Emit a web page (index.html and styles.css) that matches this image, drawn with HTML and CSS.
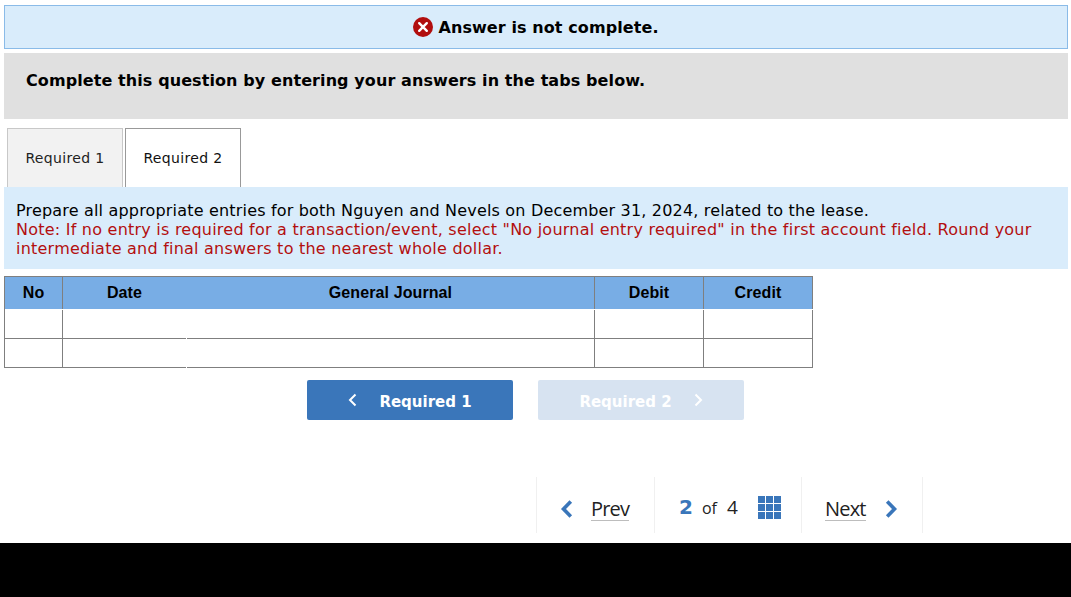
FILE: index.html
```html
<!DOCTYPE html>
<html lang="en">
<head>
<meta charset="utf-8">
<title>Answer is not complete</title>
<link rel="stylesheet" href="styles.css">
</head>
<body>
<main class="page">
  <div class="alert">
    <svg class="alert-icon" width="20" height="20" viewBox="0 0 20 20"><circle cx="10" cy="10" r="10" fill="#b10e0e"/><path d="M6.2 6.2l7.6 7.6M13.8 6.2l-7.6 7.6" stroke="#fff" stroke-width="2.4" stroke-linecap="round"/></svg>
    <strong>Answer is not complete.</strong>
  </div>
  <div class="instruction">Complete this question by entering your answers in the tabs below.</div>
  <div class="tabs">
    <div class="tab">Required 1</div>
    <div class="tab tab-active">Required 2</div>
  </div>
  <div class="note">
    <p>Prepare all appropriate entries for both Nguyen and Nevels on December 31, 2024, related to the lease.</p>
    <p class="note-red">Note: If no entry is required for a transaction/event, select "No journal entry required" in the first account field. Round your intermediate and final answers to the nearest whole dollar.</p>
  </div>
  <div class="journal">
    <div class="row row-head">
      <div class="cell c-no">No</div>
      <div class="cell c-date">Date</div>
      <div class="cell c-gj">General Journal</div>
      <div class="cell c-amt">Debit</div>
      <div class="cell c-amt">Credit</div>
    </div>
    <div class="row">
      <div class="cell c-no"></div>
      <div class="cell c-date"></div>
      <div class="cell c-gj"></div>
      <div class="cell c-amt"></div>
      <div class="cell c-amt"></div>
    </div>
    <div class="row">
      <div class="cell c-no"></div>
      <div class="cell c-date"></div>
      <div class="cell c-gj"></div>
      <div class="cell c-amt"></div>
      <div class="cell c-amt"></div>
    </div>
  </div>
  <div class="steps">
    <div class="step">
      <svg width="10" height="14" viewBox="0 0 10 14"><path d="M7.5 1.5L2 7l5.500 5.500" fill="none" stroke="#fff" stroke-width="2"/></svg>
      <span class="step-label">Required 1</span>
    </div>
    <div class="step step-off">
      <span class="step-label">Required 2</span>
      <svg width="10" height="14" viewBox="0 0 10 14"><path d="M2.500 1.500L8 7l-5.500 5.500" fill="none" stroke="#fff" stroke-width="2"/></svg>
    </div>
  </div>
  <nav class="pager">
    <div class="pg pg-prev">
      <svg width="14" height="20" viewBox="0 0 14 20"><path d="M10.800 2.500L3.500 10l7.300 7.500" fill="none" stroke="#3a76ba" stroke-width="3.600"/></svg>
      <span class="pg-link">Prev</span>
    </div>
    <div class="pg pg-mid">
      <b class="pg-cur">2</b><span class="pg-of">of</span><span class="pg-tot">4</span>
      <svg class="pg-grid" width="23" height="23" viewBox="0 0 23 23" fill="#3a76ba"><rect width="7" height="7"/><rect x="8" width="7" height="7"/><rect x="16" width="7" height="7"/><rect y="8" width="7" height="7"/><rect x="8" y="8" width="7" height="7"/><rect x="16" y="8" width="7" height="7"/><rect y="16" width="7" height="7"/><rect x="8" y="16" width="7" height="7"/><rect x="16" y="16" width="7" height="7"/></svg>
    </div>
    <div class="pg pg-next">
      <span class="pg-link">Next</span>
      <svg width="14" height="20" viewBox="0 0 14 20"><path d="M3.200 2.500L10.500 10l-7.300 7.500" fill="none" stroke="#3a76ba" stroke-width="3.600"/></svg>
    </div>
  </nav>
</main>
<footer class="blackbar"></footer>
</body>
</html>
```
FILE: styles.css
```css
* { box-sizing: border-box; }
html, body { margin: 0; padding: 0; }
body { height: 597px; overflow: hidden; background: #fff; color: #000; font-family: "DejaVu Sans", Verdana, sans-serif; display: flex; flex-direction: column; }
.page { height: 543px; padding: 5px 3px 0 4px; }
.alert { height: 44px; background: #d9ecfb; border: 1px solid #8abbe8; display: flex; align-items: center; justify-content: center; gap: 5px; font-size: 16px; letter-spacing: 0.09px; }
.alert-icon { flex: none; }
.instruction { height: 66px; margin-top: 4px; background: #e0e0e0; padding: 17px 22px 0; font-size: 16px; font-weight: 700; line-height: 22px; letter-spacing: 0.09px; }
.tabs { display: flex; gap: 2px; margin-top: 9px; padding-left: 3px; height: 59px; }
.tab { width: 116px; border: 1px solid #c8c8c8; border-bottom: 0; background: #f2f2f2; color: #222; font-size: 14px; line-height: 59px; text-align: center; letter-spacing: 0.35px; }
.tab-active { background: #fff; border-color: #999; color: #111; }
.note { height: 82px; background: #d9ecfb; padding: 14px 12px 0; font-size: 16px; line-height: 19px; letter-spacing: 0.18px; }
.note p { margin: 0; }
.note .note-red { color: #b30f0f; letter-spacing: 0.23px; }
.journal { width: 809px; margin-top: 7px; border-left: 1px solid #7f7f7f; border-top: 1px solid #7f7f7f; }
.row { display: flex; height: 29px; }
.row-head { height: 32px; margin-bottom: 1px; background: #78ade5; font-family: "Liberation Sans", Arial, sans-serif; font-size: 16px; font-weight: 700; letter-spacing: 0.1px; }
.cell { border-right: 1px solid #7f7f7f; border-bottom: 1px solid #7f7f7f; text-align: center; line-height: 31px; }
.row-head .cell { border-bottom: 0; }
.c-no { width: 58px; }
.c-date { width: 123px; border-right: 0; }
.c-gj { width: 408px; margin-left: 1px; }
.c-amt { width: 109px; }
.steps { display: flex; gap: 25px; margin-top: 12px; margin-left: 303px; }
.step { width: 206px; height: 40px; border-radius: 2px; background: #3a76ba; color: #fff; font-size: 15px; font-weight: 700; display: flex; align-items: center; justify-content: center; gap: 21px; }
.step-label { padding-top: 3px; }
.step-off { background: #d7e3f1; }
.pager { display: flex; height: 56px; margin-top: 57px; margin-left: 532px; color: #222; font-family: "Open Sans", sans-serif; }
.pg { height: 56px; display: flex; align-items: center; padding-top: 7px; border-left: 1px solid #f0f0f0; }
.pg-prev { width: 118px; padding-left: 23px; gap: 17px; }
.pg-mid { width: 147px; padding-left: 24px; }
.pg-next { width: 122px; padding-left: 23px; gap: 18px; border-right: 1px solid #f0f0f0; }
.pg-link { font-size: 20px; letter-spacing: -0.8px; line-height: 22px; border-bottom: 1px solid #bdbdbd; margin-top: 1px; }
.pg-cur { color: #3a76ba; font-size: 20px; font-family: "DejaVu Sans", sans-serif; margin-top: -3px; }
.pg-of { margin-left: 9px; font-size: 16px; margin-top: -2px; }
.pg-tot { margin-left: 10px; font-size: 19px; margin-top: -4px; }
.pg-grid { margin-left: 20px; margin-top: -3px; }
.blackbar { height: 54px; flex: none; background: #000; }
```
